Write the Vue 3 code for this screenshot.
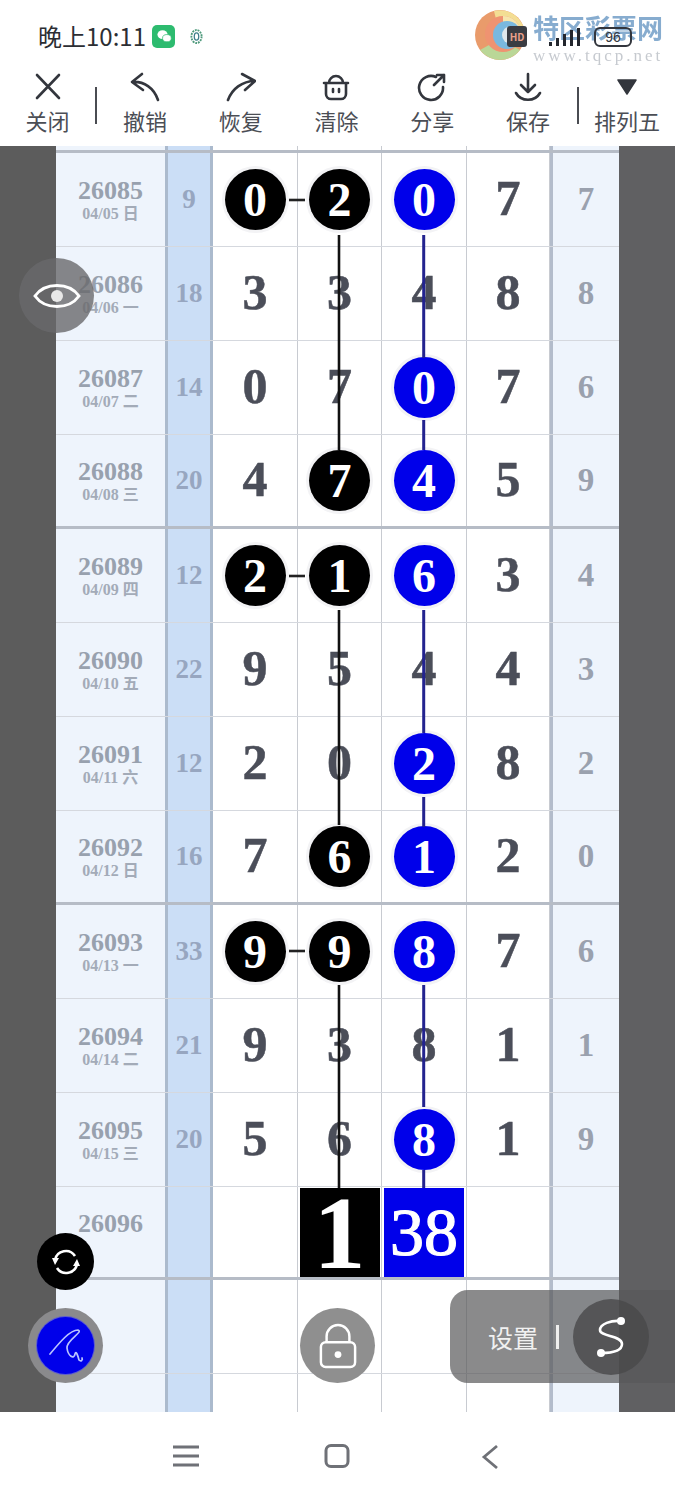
<script setup>
const rows = [
  ['26085', '04/05 日', '9', ['0', '2', '0', '7'], '7', 'bbu-'],
  ['26086', '04/06 一', '18', ['3', '3', '4', '8'], '8', '----'],
  ['26087', '04/07 二', '14', ['0', '7', '0', '7'], '6', '--u-'],
  ['26088', '04/08 三', '20', ['4', '7', '4', '5'], '9', '-bu-'],
  ['26089', '04/09 四', '12', ['2', '1', '6', '3'], '4', 'bbu-'],
  ['26090', '04/10 五', '22', ['9', '5', '4', '4'], '3', '----'],
  ['26091', '04/11 六', '12', ['2', '0', '2', '8'], '2', '--u-'],
  ['26092', '04/12 日', '16', ['7', '6', '1', '2'], '0', '-bu-'],
  ['26093', '04/13 一', '33', ['9', '9', '8', '7'], '6', 'bbu-'],
  ['26094', '04/14 二', '21', ['9', '3', '8', '1'], '1', '----'],
  ['26095', '04/15 三', '20', ['5', '6', '8', '1'], '9', '--u-']
]
const tools = [
  { label: '撤销', d: 'M12 2 L2 10 L13 18 M2 10 C14 9 24 16 28 28' },
  { label: '恢复', d: 'M16 2 L29 9 L19 18 M29 9 C16 9 6 17 2 28' },
  { label: '清除', d: 'M5 11 H25 V22 a5 5 0 0 1 -5 5 H10 a5 5 0 0 1 -5 -5 Z M8 11 a7 7 0 0 1 14 0 M12 17 V20 M18 17 V20 M3 11 H27' },
  { label: '分享', d: 'M19 5 A12 12 0 1 0 26 15 M17 13 L27 3 M20 3 H27 V10' },
  { label: '保存', d: 'M15 2 V20 M8 13 L15 20 L22 13 M3 21 C8 30 22 30 27 21' }
]
const blackLines = [[235, 450], [610, 825], [985, 1188]]
const blueLines = [[235, 358], [420, 450], [610, 733], [797, 827], [985, 1107], [1170, 1188]]
const dashes = [200, 576, 951]
</script>

<template>
  <div class="page">
    <header class="status">
      <span class="time">晚上10:11</span>
      <span class="wechat">
        <svg viewBox="0 0 22 22" width="16" height="16"><ellipse cx="9" cy="9" rx="7" ry="6" fill="#fff" /><ellipse cx="15" cy="14" rx="6" ry="5" fill="#fff" stroke="#2dbb6f" /></svg>
      </span>
      <svg class="net" viewBox="0 0 14 18" width="13" height="17"><ellipse cx="7" cy="9" rx="5.5" ry="7" fill="none" stroke="#4f9a7c" stroke-width="2" stroke-dasharray="2 1" /><ellipse cx="7" cy="9" rx="2.4" ry="4" fill="none" stroke="#3f7f8a" stroke-width="1.4" /></svg>
      <div class="mark">
        <svg class="swirl" viewBox="0 0 52 52" width="52" height="52">
          <circle cx="26" cy="26" r="25" fill="#e8935f" />
          <path d="M20 2 A25 25 0 0 1 51 26 L26 26Z" fill="#f3dc8a" />
          <path d="M6 41 A25 25 0 0 0 46 41 L26 30Z" fill="#b5d48f" />
          <circle cx="29" cy="25" r="18" fill="#ee8a66" />
          <path d="M29 7 A18 18 0 0 1 47 25 L29 25Z" fill="#f6e3a6" />
          <circle cx="33" cy="26" r="14" fill="#6fb3dc" />
          <circle cx="37" cy="26" r="9" fill="#dfe7ea" />
        </svg>
        <div class="mark-text">
          <span class="mark-cn">特区彩票网</span>
          <span class="mark-en">www.tqcp.net</span>
        </div>
      </div>
      <div class="sys">
        <span class="hd">HD</span>
        <svg class="signal" viewBox="0 0 40 20" width="40" height="20"><path d="M2 15h3v4H2zM9 11h3v8H9zM16 7h3v12h-3zM23 3h3v16h-3zM30 1h3v18h-3z" fill="#23262d" /></svg>
        <span class="battery">96</span>
      </div>
    </header>

    <nav class="toolbar">
      <div class="tool first">
        <svg viewBox="0 0 30 30" width="30" height="30"><path class="ico" d="M4 3 L26 26 M26 3 L4 26" /></svg>
        <span>关闭</span>
      </div>
      <i class="bar"></i>
      <div v-for="t in tools" :key="t.label" class="tool">
        <svg viewBox="0 0 30 30" width="30" height="30"><path class="ico" :d="t.d" /></svg>
        <span>{{ t.label }}</span>
      </div>
      <i class="bar late"></i>
      <div class="tool last">
        <svg viewBox="0 0 30 30" width="30" height="30"><path d="M6 8 H24 L15 22 Z" fill="#33363d" stroke="#33363d" stroke-width="1.5" stroke-linejoin="round" /></svg>
        <span>排列五</span>
      </div>
    </nav>

    <main class="main">
      <div class="side"></div>
      <section class="sheet">
        <div class="row stub thick">
          <div class="c date"></div><div class="c sum"></div><div class="c"></div><div class="c"></div><div class="c"></div><div class="c"></div><div class="c tail"></div>
        </div>
        <div v-for="(r, i) in rows" :key="r[0]" class="row" :class="{ thick: i % 4 === 3 }">
          <div class="c date"><b>{{ r[0] }}</b><small>{{ r[1] }}</small></div>
          <div class="c sum">{{ r[2] }}</div>
          <div v-for="(v, j) in r[3]" :key="j" class="c num">
            <span v-if="r[5][j] === 'b'" class="ball black">{{ v }}</span>
            <span v-else-if="r[5][j] === 'u'" class="ball blue">{{ v }}</span>
            <span v-else class="plain">{{ v }}</span>
          </div>
          <div class="c tail">{{ r[4] }}</div>
        </div>
        <div class="row thick short">
          <div class="c date top"><b>26096</b></div>
          <div class="c sum"></div>
          <div class="c"></div>
          <div class="c boxed"><span class="box black one">1</span></div>
          <div class="c boxed"><span class="box blue">38</span></div>
          <div class="c"></div>
          <div class="c tail"></div>
        </div>
        <div class="row">
          <div class="c date"></div><div class="c sum"></div><div class="c"></div><div class="c"></div><div class="c"></div><div class="c"></div><div class="c tail"></div>
        </div>
        <div class="row">
          <div class="c date"></div><div class="c sum"></div><div class="c"></div><div class="c"></div><div class="c"></div><div class="c"></div><div class="c tail"></div>
        </div>

        <svg class="links" viewBox="0 146 563 1266" width="563" height="1266">
          <path v-for="(l, i) in blackLines" :key="'k' + i" :d="`M283 ${l[0]} V${l[1]}`" stroke="#111" stroke-width="2.6" fill="none" />
          <path v-for="(l, i) in blueLines" :key="'u' + i" :d="`M367.7 ${l[0]} V${l[1]}`" stroke="#23238f" stroke-width="3" fill="none" />
          <path v-for="y in dashes" :key="'d' + y" :d="`M233 ${y} H249`" stroke="#222" stroke-width="2.6" fill="none" />
        </svg>
      </section>
      <div class="side right"></div>

      <button class="fab eye">
        <svg viewBox="0 0 48 32" width="48" height="32"><path d="M2 16 C12 2 36 2 46 16 C36 30 12 30 2 16Z" fill="none" stroke="#fff" stroke-width="3" /><circle cx="24" cy="16" r="6" fill="#e8e8e8" /></svg>
      </button>
      <button class="fab sync">
        <svg viewBox="0 0 30 30" width="30" height="30"><path d="M4 13 A11 11 0 0 1 24 9 M26 17 A11 11 0 0 1 6 21" fill="none" stroke="#fff" stroke-width="2.6" /><path d="M1 11 L8 11 L4 18Z M29 19 L22 19 L26 12Z" fill="#fff" /></svg>
      </button>
      <button class="fab pen">
        <span class="pen-in">
          <svg viewBox="0 0 56 56" width="56" height="56"><path d="M12 36 C22 24 32 12 40 12 C46 14 28 22 29 30 C30 38 36 42 37 36 C38 32 40 38 41 42 C43 44 45 42 44 40" fill="none" stroke="#b9c3ff" stroke-width="1.7" stroke-linecap="round" /></svg>
        </span>
      </button>
      <button class="fab lock">
        <svg viewBox="0 0 40 48" width="38" height="46"><path d="M8 20 V14 a12 12 0 0 1 24 0 V20" fill="none" stroke="#fff" stroke-width="2.6" /><rect x="2" y="20" width="36" height="26" rx="5" fill="none" stroke="#fff" stroke-width="2.6" /><circle cx="20" cy="33" r="3.6" fill="#fff" /></svg>
      </button>
      <div class="settings">
        <span class="set-label">设置</span>
        <i class="set-bar"></i>
        <span class="set-s">
          <svg viewBox="0 0 40 44" width="40" height="44"><path d="M30 6 C20 5 9 9 9 15 C9 22 31 20 31 29 C31 36 20 38 10 38" fill="none" stroke="#fff" stroke-width="2.6" /><circle cx="30" cy="6" r="4" fill="#fff" /><circle cx="10" cy="38" r="4" fill="#fff" /></svg>
        </span>
      </div>
    </main>

    <footer class="navbar">
      <svg viewBox="0 0 26 24" width="26" height="24"><path d="M0 3 H26 M0 12 H26 M0 21 H26" stroke="#6f7177" stroke-width="3" fill="none" /></svg>
      <svg viewBox="0 0 26 24" width="26" height="24"><rect x="2" y="1.5" width="22" height="21" rx="5" fill="none" stroke="#6f7177" stroke-width="3" /></svg>
      <svg class="back" viewBox="0 0 18 26" width="18" height="26"><path d="M16 2 L3 13 L16 24" fill="none" stroke="#6f7177" stroke-width="2.8" /></svg>
    </footer>
  </div>
</template>

<style scoped>
.page {
  position: relative;
  width: 675px;
  height: 1500px;
  display: flex;
  flex-direction: column;
  overflow: hidden;
  background: #fff;
  font-family: "Noto Sans CJK SC", "Noto Sans", sans-serif;
}
.status {
  position: relative;
  height: 66px;
  flex: none;
  display: flex;
  align-items: center;
  padding: 6px 0 0 38px;
  box-sizing: border-box;
  color: #2c2e33;
}
.time {
  font-size: 24px;
  line-height: 30px;
  width: 114px;
  white-space: nowrap;
}
.wechat {
  width: 23px;
  height: 23px;
  border-radius: 5px;
  background: #2dbb6f;
  display: flex;
  align-items: center;
  justify-content: center;
}
.net { margin-left: 15px; }
.sys {
  position: absolute;
  left: 507px;
  top: 26px;
  display: flex;
  align-items: center;
}
.hd {
  width: 20px;
  box-sizing: border-box;
  text-align: center;
  background: #3a3c42;
  color: #e9a08a;
  font-size: 10px;
  font-weight: 700;
  padding: 3px 0;
  border-radius: 3px;
}
.signal { margin-left: 20px; }
.battery {
  width: 38px;
  height: 20px;
  margin-left: 7px;
  box-sizing: border-box;
  border: 2px solid #33363d;
  border-radius: 6px;
  font-size: 14px;
  line-height: 16px;
  text-align: center;
  color: #33363d;
  font-family: "Liberation Sans", sans-serif;
}
.mark {
  position: absolute;
  left: 474px;
  top: 9px;
  display: flex;
  gap: 7px;
  opacity: .92;
  pointer-events: none;
}
.swirl { filter: blur(.7px); }
.mark-text {
  display: flex;
  flex-direction: column;
  padding-top: 3px;
  filter: blur(.5px);
}
.mark-cn {
  font-size: 26px;
  line-height: 30px;
  font-weight: 700;
  color: #7da6cc;
  white-space: nowrap;
}
.mark-en {
  font-family: "Liberation Serif", serif;
  font-size: 17px;
  line-height: 20px;
  letter-spacing: 3px;
  color: #c2c6cc;
  margin-top: 4px;
  white-space: nowrap;
}
.toolbar {
  height: 80px;
  flex: none;
  display: flex;
  align-items: flex-start;
}
.tool {
  width: 95.8px;
  flex: none;
  display: flex;
  flex-direction: column;
  align-items: center;
  padding-top: 6px;
  color: #4b4e55;
  font-size: 22px;
  line-height: 34px;
}
.tool.first { width: 95px; }
.tool span { margin-top: 1px; white-space: nowrap; }
.ico {
  fill: none;
  stroke: #33363d;
  stroke-width: 2.6;
  stroke-linecap: round;
  stroke-linejoin: round;
}
.bar {
  width: 2px;
  height: 37px;
  flex: none;
  margin-top: 21px;
  background: #4a4c52;
}
.bar.late { margin-left: 1px; }
.main {
  position: relative;
  height: 1266px;
  flex: none;
  display: flex;
  overflow: hidden;
}
.side {
  width: 56px;
  flex: none;
  background: #5c5c5c;
}
.side.right { background: #606062; }
.sheet {
  position: relative;
  width: 563px;
  flex: none;
  overflow: hidden;
  background: #fff;
}
.row {
  height: 94px;
  display: grid;
  grid-template-columns: 109px 48px 85px 84px 85px 83px 69px;
  box-sizing: border-box;
  border-bottom: 1px solid #d5d8de;
}
.row.stub { height: 7px; }
.row.short { height: 93px; }
.row.thick { border-bottom: 3px solid #b6bcc6; }
.c {
  display: flex;
  align-items: center;
  justify-content: center;
  box-sizing: border-box;
  border-right: 1px solid #c8cbd1;
  min-height: 0;
  font-family: "Liberation Serif", serif;
  font-weight: 700;
}
.date {
  flex-direction: column;
  background: #eef4fc;
  border-right: 0;
  color: #98a1ae;
  padding-top: 1px;
}
.date.top { justify-content: flex-start; padding-top: 23px; }
.date b { font-size: 26px; line-height: 27px; }
.date small {
  font-size: 16px;
  line-height: 19px;
  font-family: "Liberation Serif", "Noto Sans CJK SC", serif;
  font-weight: 700;
  color: #a3abb8;
}
.sum {
  background: #cbdef6;
  border-left: 3px solid #abbacd;
  border-right: 3px solid #abbacd;
  color: #97a6c0;
  font-size: 27px;
}
.num {
  font-size: 50px;
  color: #4b4e59;
}
.plain {
  margin-bottom: 3px;
  -webkit-text-stroke: .5px currentColor;
}
.tail {
  background: #eef4fc;
  border-left: 3px solid #b3bccb;
  border-right: 0;
  color: #9aa1ae;
  font-size: 33px;
}
.ball {
  width: 61px;
  height: 61px;
  flex: none;
  border-radius: 50%;
  display: flex;
  align-items: center;
  justify-content: center;
  color: #fff;
  font-size: 48px;
  box-shadow: 0 0 0 3px #f3f3f5;
}
.black { background: #000; }
.blue { background: #0000ea; }
.boxed { padding: 1px 0 0; }
.box {
  width: 80px;
  height: 89px;
  display: flex;
  align-items: center;
  justify-content: center;
  color: #fff;
  font-weight: 400;
  font-size: 68px;
  -webkit-text-stroke: 1.2px #fff;
}
.box.one { font-size: 104px; font-weight: 700; -webkit-text-stroke: 0; }
.links {
  position: absolute;
  left: 0;
  top: 0;
  pointer-events: none;
}
.fab {
  position: absolute;
  border: 0;
  padding: 0;
  border-radius: 50%;
  display: flex;
  align-items: center;
  justify-content: center;
}
.eye {
  left: 19px;
  top: 112px;
  width: 75px;
  height: 75px;
  background: rgba(105, 105, 108, .8);
}
.sync {
  left: 37px;
  top: 1087px;
  width: 57px;
  height: 57px;
  background: #000;
}
.pen {
  left: 28px;
  top: 1162px;
  width: 75px;
  height: 75px;
  background: #8a8a8c;
}
.pen-in {
  width: 57px;
  height: 57px;
  border-radius: 50%;
  background: #0000ea;
  box-shadow: 0 0 0 1px #5b5bd0;
  display: flex;
  align-items: center;
  justify-content: center;
}
.lock {
  left: 300px;
  top: 1162px;
  width: 75px;
  height: 75px;
  background: #8f8f8f;
}
.settings {
  position: absolute;
  left: 450px;
  top: 1144px;
  width: 225px;
  height: 93px;
  box-sizing: border-box;
  border-radius: 18px 0 0 18px;
  background: rgba(88, 88, 90, .7);
  display: flex;
  align-items: center;
  padding-left: 38px;
  color: #f1f1f1;
}
.set-label { font-size: 25px; line-height: 30px; width: 68px; white-space: nowrap; }
.set-bar { width: 3px; height: 24px; background: #eee; }
.set-s {
  width: 76px;
  height: 76px;
  margin-left: 14px;
  border-radius: 50%;
  background: rgba(72, 72, 74, .8);
  display: flex;
  align-items: center;
  justify-content: center;
}
.navbar {
  flex: 1;
  display: flex;
  align-items: flex-start;
  gap: 125px;
  padding: 32px 0 0 173px;
  box-sizing: border-box;
  background: #fff;
}
.back { margin-left: 6px; }
</style>
